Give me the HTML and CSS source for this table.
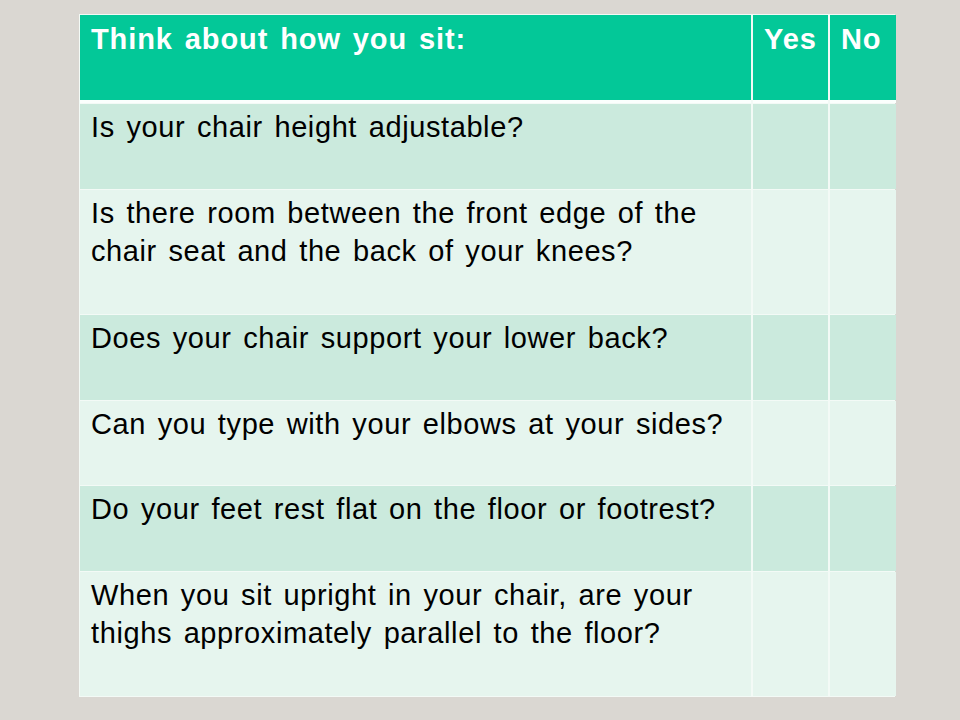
FILE: index.html
```html
<!DOCTYPE html>
<html>
<head>
<meta charset="utf-8">
<link rel="stylesheet" href="styles.css">
</head>
<body>
<div class="sheet">
  <div class="cell head">Think about how you sit:</div>
  <div class="cell head">Yes</div>
  <div class="cell head">No</div>

  <div class="cell odd">Is your chair height adjustable?</div>
  <div class="cell odd"></div>
  <div class="cell odd"></div>

  <div class="cell even">Is there room between the front edge of the chair seat and the back of your knees?</div>
  <div class="cell even"></div>
  <div class="cell even"></div>

  <div class="cell odd">Does your chair support your lower back?</div>
  <div class="cell odd"></div>
  <div class="cell odd"></div>

  <div class="cell even">Can you type with your elbows at your sides?</div>
  <div class="cell even"></div>
  <div class="cell even"></div>

  <div class="cell odd">Do your feet rest flat on the floor or footrest?</div>
  <div class="cell odd"></div>
  <div class="cell odd"></div>

  <div class="cell even">When you sit upright in your chair, are your thighs approximately parallel to the floor?</div>
  <div class="cell even"></div>
  <div class="cell even"></div>
</div>
</body>
</html>
```

FILE: styles.css
```css
html, body {
  margin: 0;
  padding: 0;
  background: #dad7d2;
  width: 960px;
  height: 720px;
  overflow: hidden;
}
.sheet {
  margin: 14px 0 0 79px;
  width: 816px;
  padding: 1px;
  box-sizing: border-box;
  background: #f3faf6;
  display: grid;
  grid-template-columns: 671px 75px 66px;
  grid-template-rows: 88px 85px 124px 85px 84px 85px 124px;
  column-gap: 2px;
  row-gap: 1px;
  font-family: "Liberation Sans", Arial, sans-serif;
  font-size: 29px;
  line-height: 38px;
  letter-spacing: 0.6px;
  word-spacing: 3px;
  color: #000;
}
.cell {
  padding: 4px 8px 0 11px;
  box-sizing: border-box;
}
.head {
  background: #03c898;
  color: #fff;
  font-weight: bold;
  letter-spacing: 0.9px;
  border-bottom: 3px solid #fbfffd;
  padding-top: 5px;
  padding-left: 11px;
}
.odd {
  background: #cbeadd;
}
.even {
  background: #e6f5ee;
}
```
